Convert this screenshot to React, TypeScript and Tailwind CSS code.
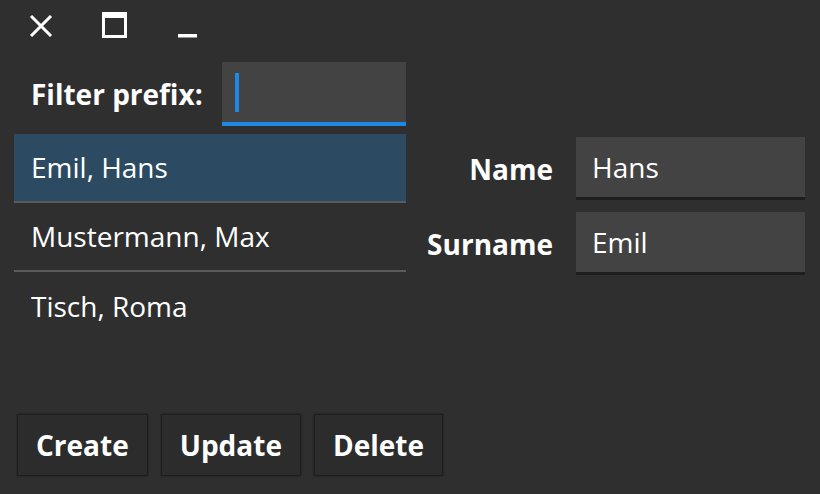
import * as React from "react";

const people = [
  { name: "Hans", surname: "Emil" },
  { name: "Max", surname: "Mustermann" },
  { name: "Roma", surname: "Tisch" },
];

function CloseIcon() {
  return (
    <svg width="24" height="22" viewBox="0 0 24 22" className="shrink-0">
      <path d="M2 1 L22 21 M22 1 L2 21" stroke="white" strokeWidth="3" />
    </svg>
  );
}

function MaximizeIcon() {
  return (
    <svg width="25" height="26" viewBox="0 0 25 26" className="shrink-0">
      <rect x="1.5" y="1.5" width="22" height="23" fill="none" stroke="white" strokeWidth="3" />
      <rect x="1" y="1" width="23" height="5" fill="white" />
    </svg>
  );
}

function MinimizeIcon() {
  return (
    <svg width="19" height="26" viewBox="0 0 19 26" className="shrink-0">
      <rect x="0" y="22" width="19" height="3.5" fill="white" />
    </svg>
  );
}

export default function App() {
  const [selected, setSelected] = React.useState(0);
  const current = people[selected];

  return (
    <div
      className="flex h-[494px] w-[820px] flex-col overflow-hidden bg-[#2f2f2f] text-white"
      style={{ fontFamily: '"Open Sans", "Noto Sans", sans-serif' }}
    >
      {/* title bar */}
      <div className="flex h-[50px] shrink-0 items-start pl-[29px] pt-[12px]">
        <div className="mt-[3px]">
          <CloseIcon />
        </div>
        <div className="ml-[49px]">
          <MaximizeIcon />
        </div>
        <div className="ml-[51px]">
          <MinimizeIcon />
        </div>
      </div>

      <div className="flex flex-1">
        {/* left column */}
        <div className="ml-[14px] flex w-[392px] flex-col">
          <div className="mt-[12px] flex items-center">
            <span className="pl-[17px] text-[28px] font-bold leading-none">
              Filter prefix:
            </span>
            <div className="ml-auto flex h-[64px] w-[184px] items-center border-b-4 border-[#1e88e5] bg-[#434343] pl-[13px]">
              <span className="h-[39px] w-[4px] bg-[#1e88e5]" />
            </div>
          </div>

          <ul className="mt-[8px] flex flex-col">
            {people.map((p, i) => (
              <li
                key={p.surname}
                onClick={() => setSelected(i)}
                className={
                  "flex h-[69px] items-center pl-[17px] pb-[2px] text-[28px] " +
                  (i < people.length - 1 ? "border-b-2 border-[#5b5b5b] " : "") +
                  (i === selected ? "bg-[#2c4a62]" : "")
                }
              >
                {p.surname}, {p.name}
              </li>
            ))}
          </ul>
        </div>

        {/* right column */}
        <div className="mr-[15px] flex flex-1 flex-col gap-[12px] pt-[87px]">
          {[
            { label: "Name", value: current.name },
            { label: "Surname", value: current.surname },
          ].map((f) => (
            <div key={f.label} className="flex items-center">
              <span className="flex-1 pr-[23px] text-right text-[28px] font-bold">
                {f.label}
              </span>
              <div className="flex h-[63px] w-[229px] items-center border-b-[3px] border-[#1e1e1e] bg-[#434343] pl-[16px] text-[28px]">
                {f.value}
              </div>
            </div>
          ))}
        </div>
      </div>

      {/* buttons */}
      <div className="mb-[18px] ml-[17px] flex gap-[13px]">
        {["Create", "Update", "Delete"].map((b) => (
          <button
            key={b}
            className="h-[62px] border border-[#1e1e1e] bg-[#2c2c2c] px-[18px] text-[28px] font-bold text-white shadow-[0_0_2px_rgba(0,0,0,0.4)]"
          >
            {b}
          </button>
        ))}
      </div>
    </div>
  );
}
